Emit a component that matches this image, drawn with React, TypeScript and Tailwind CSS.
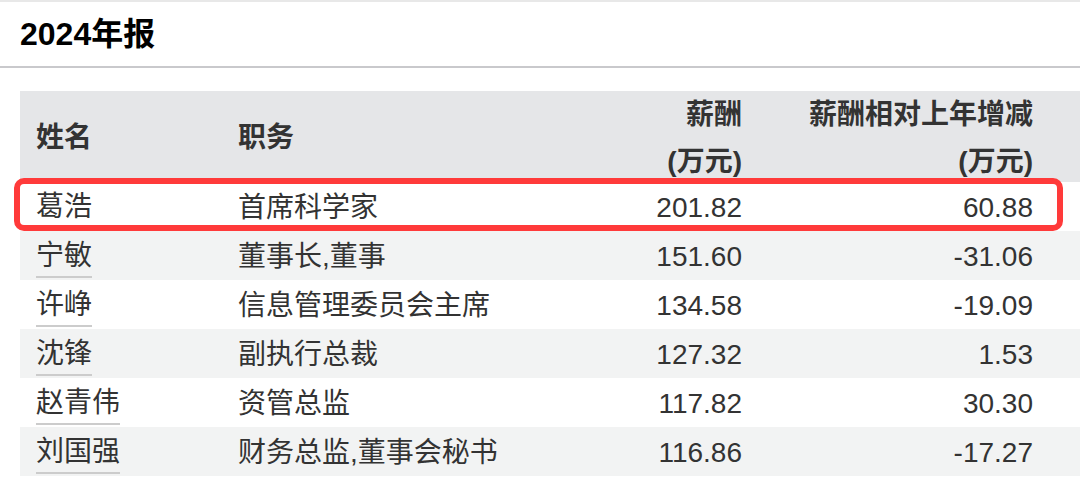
import React from "react";

const rows = [
  { name: "葛浩", role: "首席科学家", pay: "201.82", diff: "60.88" },
  { name: "宁敏", role: "董事长,董事", pay: "151.60", diff: "-31.06" },
  { name: "许峥", role: "信息管理委员会主席", pay: "134.58", diff: "-19.09" },
  { name: "沈锋", role: "副执行总裁", pay: "127.32", diff: "1.53" },
  { name: "赵青伟", role: "资管总监", pay: "117.82", diff: "30.30" },
  { name: "刘国强", role: "财务总监,董事会秘书", pay: "116.86", diff: "-17.27" },
];

const font = { fontFamily: '"Liberation Sans", "Noto Sans CJK SC", sans-serif' };

export default function App() {
  return (
    <div className="w-[1080px] h-[483px] bg-white overflow-hidden text-[#333]" style={font}>
      <div className="h-[2px] bg-[#e8e8e8]" />
      <div className="h-[64px] flex items-center pl-5 text-[32px] font-bold text-black">
        2024年报
      </div>
      <div className="h-[2px] bg-[#c9c9cc]" />
      <div className="pt-[23px] pl-5">
        <div className="grid grid-cols-[202px_338px_198px_291px_1fr] h-[91px] bg-[#e5e6e8] font-bold text-[28px]">
          <div className="pl-4 flex items-center">姓名</div>
          <div className="pl-4 flex items-center">职务</div>
          <div className="pr-4 text-right leading-[47px]">
            <div>薪酬</div>
            <div>(万元)</div>
          </div>
          <div className="pr-4 text-right leading-[47px]">
            <div>薪酬相对上年增减</div>
            <div>(万元)</div>
          </div>
          <div />
        </div>
        {rows.map((r, i) => (
          <div
            key={r.name}
            className={
              "relative grid grid-cols-[202px_338px_198px_291px_1fr] h-[49px] text-[28px] " +
              (i % 2 === 1 ? "bg-[#f2f3f3]" : "bg-white")
            }
          >
            <div className="pl-4 flex items-center pt-[2px]">
              <span className="inline-block leading-[40px] border-b-2 border-[#cccccc]">{r.name}</span>
            </div>
            <div className="pl-4 flex items-center pt-[2px]">{r.role}</div>
            <div className="pr-4 flex items-center justify-end pt-[2px]">{r.pay}</div>
            <div className="pr-4 flex items-center justify-end pt-[2px]">{r.diff}</div>
            <div />
            {i === 0 && (
              <div className="absolute left-[-6px] right-[17px] top-[-4px] bottom-0 border-[6px] border-[#ff3a3a] rounded-[10px] pointer-events-none" />
            )}
          </div>
        ))}
      </div>
    </div>
  );
}
